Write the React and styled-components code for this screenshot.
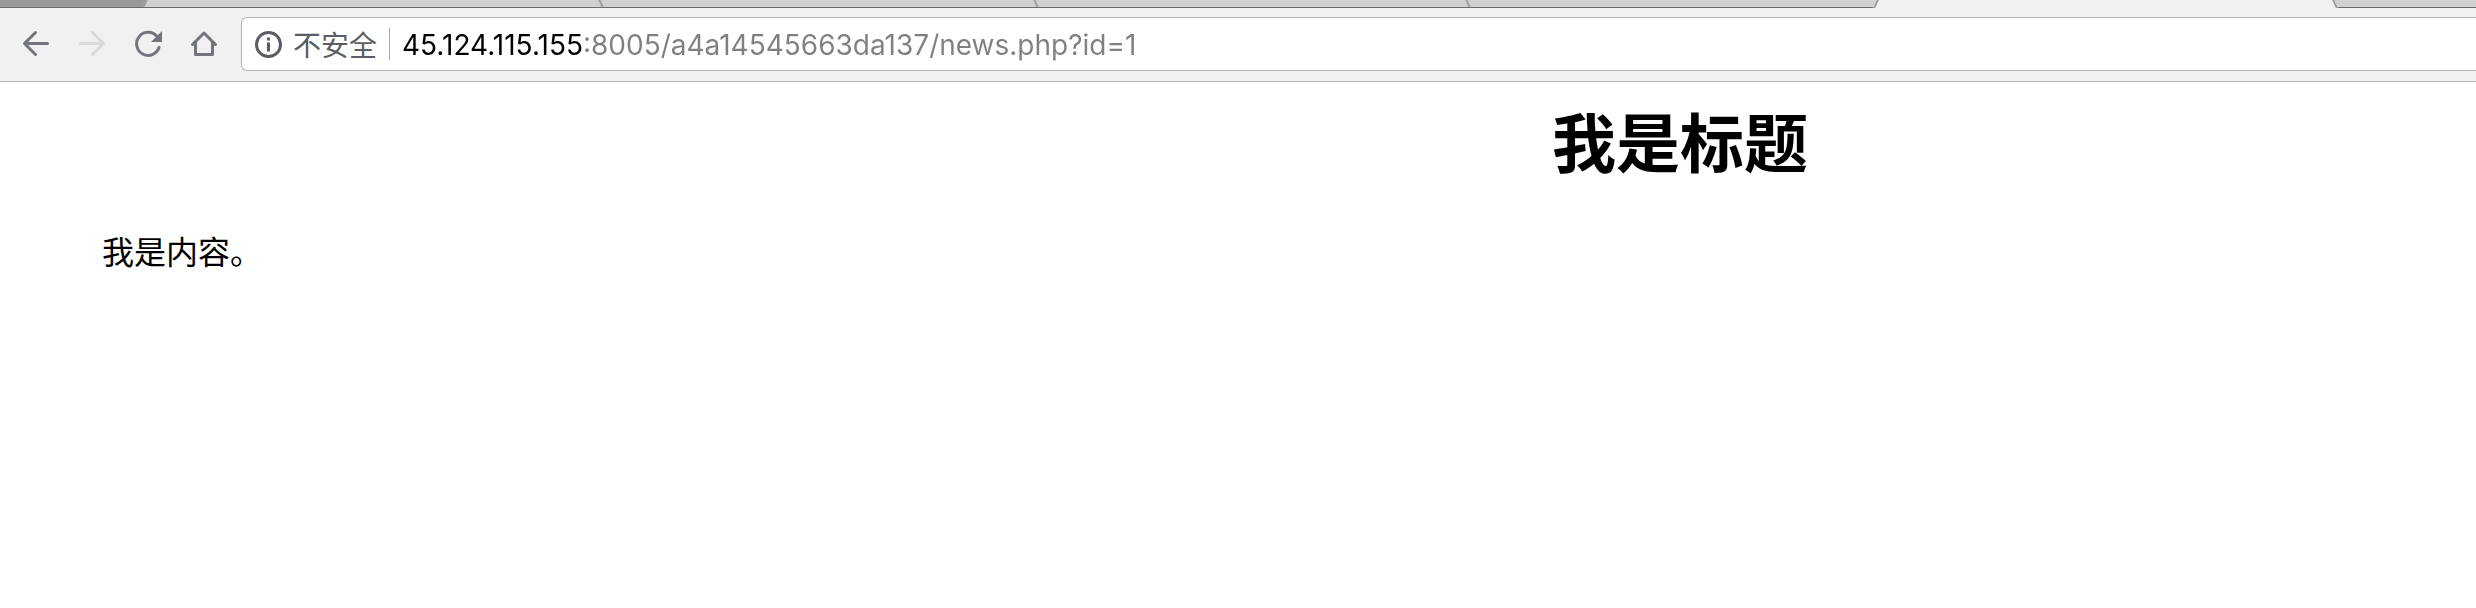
import React, { useState } from "react";
import styled, { createGlobalStyle, css } from "styled-components";

const GlobalStyle = createGlobalStyle`
  * { box-sizing: border-box; }
  body {
    margin: 0;
    background: #fff;
    color: #000;
    font-family: Inter, "Noto Sans CJK SC", sans-serif;
    overflow-x: hidden;
  }
`;

const TabStrip = styled.nav`
  display: flex;
  height: 8px;
  overflow: hidden;
  background: #f1f1f1;
`;

const slant = css`
  content: "";
  position: absolute;
  top: 0;
  width: 8px;
  height: ${(p) => (p.$tone === "active" ? "8px" : "7px")};
  background: inherit;
`;

const Tab = styled.button`
  position: relative;
  flex: ${(p) => p.$grow} 1 0;
  min-width: 0;
  height: 8px;
  padding: 0;
  border: 0;
  border-bottom: ${(p) => (p.$tone === "active" ? "0" : "1px solid #6c6c6c")};
  background: ${(p) => ({ dark: "#999", idle: "#d0d0d0", active: "#f1f1f1" })[p.$tone]};
  z-index: ${(p) => (p.$tone === "active" ? 1 : 0)};

  &::before {
    ${(p) => p.$edge && slant}
    left: -2px;
    border-left: 2px solid #999;
    transform: skewX(${(p) => (p.$edge === "rising" ? "-25deg" : "25deg")});
  }

  &::after {
    ${(p) => p.$tone === "active" && slant}
    right: -2px;
    border-right: 2px solid #999;
    transform: skewX(25deg);
  }
`;

const Toolbar = styled.header`
  display: flex;
  align-items: center;
  height: 74px;
  padding: 0 0 2px 8px;
  background: #f1f1f1;
  border-bottom: 1px solid #b4b4b4;
`;

const NavButtons = styled.div`
  display: flex;
  width: 233px;
`;

const IconButton = styled.button`
  display: flex;
  align-items: center;
  justify-content: center;
  width: 56px;
  height: 56px;
  padding: 0;
  border: 0;
  background: none;
  color: #72757c;
  &:disabled { color: #d9dadb; }
`;

const AddressBar = styled.div`
  display: flex;
  flex: 1;
  align-items: center;
  height: 54px;
  padding-left: 12px;
  background: #fff;
  border: 1px solid #b4b4b4;
  border-right: 0;
  border-radius: 6px 0 0 6px;
`;

const SecurityChip = styled.button`
  display: flex;
  align-items: center;
  gap: 11px;
  height: 32px;
  padding: 0 12px 0 0;
  border: 0;
  border-right: 1px solid #a8a8a8;
  background: none;
  color: #5a5d63;
  font: 28px/32px "Noto Sans CJK SC", sans-serif;
  white-space: nowrap;
`;

const UrlInput = styled.input`
  flex: 1;
  min-width: 0;
  height: 42px;
  margin-left: 12px;
  padding: 2px 0 0;
  border: 0;
  outline: 0;
  background: linear-gradient(to right, #000 181px, #808080 181px);
  background-clip: text;
  -webkit-background-clip: text;
  -webkit-text-fill-color: transparent;
  font: 28px/40px Inter, sans-serif;
`;

const Page = styled.main`
  padding: 18px 0 32px;
`;

const Title = styled.h1`
  margin: 0;
  padding-left: 35.7%;
  font-size: 64px;
  line-height: 88px;
  font-weight: 700;
  text-align: center;
`;

const Content = styled.p`
  margin: 41px 0 0;
  padding: 0 102px;
  font-size: 32px;
  line-height: 48px;
`;

const tabs = [
  { label: "Tab 1", grow: 146, tone: "dark" },
  { label: "Tab 2", grow: 456, tone: "idle", edge: "rising" },
  { label: "Tab 3", grow: 435, tone: "idle", edge: "falling" },
  { label: "Tab 4", grow: 432, tone: "idle", edge: "falling" },
  { label: "Tab 5", grow: 408, tone: "idle", edge: "falling" },
  { label: "Tab 6", grow: 457, tone: "active", edge: "rising" },
  { label: "Tab 7", grow: 142, tone: "idle" },
];

function Glyph({ children }) {
  return (
    <svg width="28" height="28" viewBox="0 0 28 28" fill="none" stroke="currentColor" strokeWidth="3" aria-hidden="true">
      {children}
    </svg>
  );
}

export default function App() {
  const [url, setUrl] = useState("45.124.115.155:8005/a4a14545663da137/news.php?id=1");
  return (
    <>
      <GlobalStyle />
      <TabStrip>
        {tabs.map((t) => (
          <Tab key={t.label} aria-label={t.label} $grow={t.grow} $tone={t.tone} $edge={t.edge} />
        ))}
      </TabStrip>
      <Toolbar>
        <NavButtons>
          <IconButton aria-label="Back">
            <Glyph><path d="M25.5 13.5H3M13.5 2.5l-11 11 11 11" strokeLinecap="round" strokeLinejoin="round" /></Glyph>
          </IconButton>
          <IconButton aria-label="Forward" disabled>
            <Glyph><path d="M2.5 13.5H25M14.5 2.5l11 11-11 11" strokeLinecap="round" strokeLinejoin="round" /></Glyph>
          </IconButton>
          <IconButton aria-label="Reload">
            <Glyph>
              <path d="M22.5 6A11.5 11.5 0 1 0 25 17.5" strokeLinecap="round" />
              <path d="M28 1v11H17z" fill="currentColor" stroke="none" />
            </Glyph>
          </IconButton>
          <IconButton aria-label="Home">
            <Glyph><path d="M2.5 14.5L14 3l11.5 11.5M5.5 12.5v12h17v-12" strokeLinecap="round" strokeLinejoin="round" /></Glyph>
          </IconButton>
        </NavButtons>
        <AddressBar>
          <SecurityChip>
            <Glyph>
              <circle cx="14.5" cy="14.5" r="12" />
              <path d="M14.5 12.5v9M14.5 7.5v3" />
            </Glyph>
            不安全
          </SecurityChip>
          <UrlInput aria-label="Address" value={url} onChange={(e) => setUrl(e.target.value)} spellCheck={false} />
        </AddressBar>
      </Toolbar>
      <Page>
        <Title>我是标题</Title>
        <Content>我是内容。</Content>
      </Page>
    </>
  );
}
